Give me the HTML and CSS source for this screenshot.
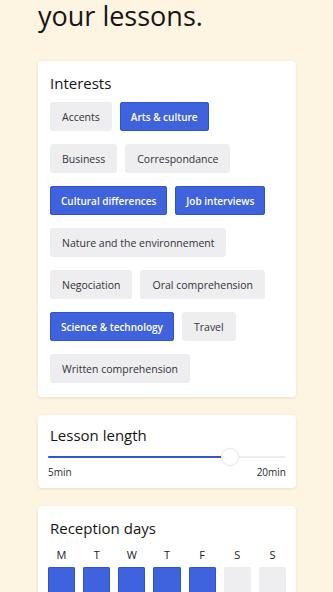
FILE: index.html
```html
<!DOCTYPE html>
<html>
<head>
<meta charset="utf-8">
<link rel="stylesheet" href="styles.css">
</head>
<body>
<div class="page">
  <h1 class="title">your lessons.</h1>

  <section class="card card-interests">
    <h2 class="card-title">Interests</h2>
    <div class="chips">
      <span class="chip">Accents</span>
      <span class="chip chip-on">Arts &amp; culture</span>
      <span class="chip">Business</span>
      <span class="chip">Correspondance</span>
      <span class="chip chip-on">Cultural differences</span>
      <span class="chip chip-on">Job interviews</span>
      <span class="chip">Nature and the environnement</span>
      <span class="chip">Negociation</span>
      <span class="chip">Oral comprehension</span>
      <span class="chip chip-on">Science &amp; technology</span>
      <span class="chip">Travel</span>
      <span class="chip">Written comprehension</span>
    </div>
  </section>

  <section class="card card-length">
    <h2 class="card-title">Lesson length</h2>
    <div class="slider">
      <div class="track"><div class="fill" style="width:76.6%"></div></div>
      <div class="knob" style="left:76.6%"></div>
    </div>
    <div class="range-labels"><span>5min</span><span>20min</span></div>
  </section>

  <section class="card card-days">
    <h2 class="card-title">Reception days</h2>
    <div class="days">
      <span class="day-label">M</span>
      <span class="day-label">T</span>
      <span class="day-label">W</span>
      <span class="day-label">T</span>
      <span class="day-label">F</span>
      <span class="day-label">S</span>
      <span class="day-label">S</span>
      <span class="day-box day-on"></span>
      <span class="day-box day-on"></span>
      <span class="day-box day-on"></span>
      <span class="day-box day-on"></span>
      <span class="day-box day-on"></span>
      <span class="day-box"></span>
      <span class="day-box"></span>
    </div>
  </section>
</div>
</body>
</html>
```

FILE: styles.css
```css
html, body {
  margin: 0;
  padding: 0;
}
body {
  background: #fef4e2;
  font-family: "Open Sans", "Noto Sans", sans-serif;
  color: #1b1b1f;
}
.page {
  padding: 0 37px 40px 38px;
}
.title {
  margin: 0 0 29px;
  font-size: 27px;
  line-height: 32px;
  font-weight: 500;
  color: #161616;
}
.card {
  background: #ffffff;
  border-radius: 4px;
  box-shadow: 0 1px 3px rgba(120, 90, 40, 0.12);
  margin-bottom: 18px;
}
.card-title {
  margin: 0;
  font-size: 15px;
  line-height: 20px;
  font-weight: 500;
  color: #151515;
}
.card-interests {
  padding: 12px 12px 14px;
}
.card-interests .card-title {
  margin-bottom: 9px;
}
.chips {
  display: flex;
  flex-wrap: wrap;
  gap: 13px 8px;
  padding-right: 2px;
}
.chip {
  display: inline-flex;
  align-items: center;
  height: 29px;
  padding: 0 12px;
  box-sizing: border-box;
  border-radius: 3px;
  background: #eeedf0;
  font-size: 10.5px;
  color: #333337;
  white-space: nowrap;
}
.chip-on {
  background: #3f63dd;
  color: #ffffff;
  font-size: 10px;
  font-weight: 600;
  padding: 0 11px;
  box-shadow: inset 0 0 0 1px #2f53d6;
}
.card-length {
  padding: 10px 12px 9px;
}
.slider {
  position: relative;
  height: 18px;
  margin: 3px -2px 0;
  display: flex;
  align-items: center;
}
.track {
  flex: 1;
  height: 2px;
  background: #eeedf2;
  border-radius: 1px;
}
.fill {
  height: 100%;
  background: #3553d9;
  border-radius: 1px;
}
.knob {
  position: absolute;
  top: 0;
  width: 18px;
  height: 18px;
  margin-left: -9px;
  box-sizing: border-box;
  border-radius: 50%;
  background: #ffffff;
  border: 1px solid #ececf2;
  box-shadow: 0 0 2px rgba(0, 0, 0, 0.08);
}
.range-labels {
  display: flex;
  justify-content: space-between;
  margin: 0 -2px;
  font-size: 10px;
  line-height: 13px;
  color: #2a2a2e;
}
.card-days {
  padding: 12px 12px 12px;
}
.days {
  display: grid;
  grid-template-columns: repeat(7, 1fr);
  column-gap: 8px;
  margin: 10px -2px 0;
}
.day-label {
  text-align: center;
  font-size: 11px;
  line-height: 14px;
  font-weight: 500;
  color: #222226;
  margin-bottom: 5px;
}
.day-box {
  height: 28px;
  border-radius: 2px;
  background: #eeedf0;
}
.day-on {
  background: #3f63dd;
  box-shadow: inset 0 0 0 1px #2f53d6;
}
```
